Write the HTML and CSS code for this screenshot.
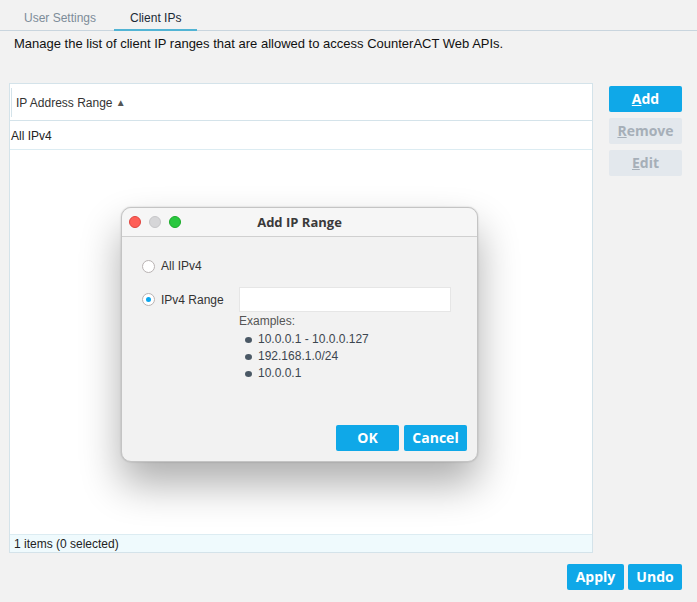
FILE: index.html
```html
<!DOCTYPE html>
<html>
<head>
<meta charset="utf-8">
<link rel="stylesheet" href="styles.css">
</head>
<body>
<div class="page">
  <div class="tabs">
    <div class="tab">User Settings</div>
    <div class="tab active">Client IPs</div>
  </div>
  <div class="desc">Manage the list of client IP ranges that are allowed to access CounterACT Web APIs.</div>
  <div class="main">
    <div class="table">
      <div class="thead"><span class="th">IP Address Range <span class="sort">&#9650;</span></span></div>
      <div class="row">All IPv4</div>
      <div class="tbody"></div>
      <div class="tfoot">1 items (0 selected)</div>
    </div>
    <div class="side">
      <button class="btn"><u>A</u>dd</button>
      <button class="btn disabled"><u>R</u>emove</button>
      <button class="btn disabled"><u>E</u>dit</button>
    </div>
  </div>
  <div class="bottom">
    <button class="btn small">Apply</button>
    <button class="btn small">Undo</button>
  </div>

  <div class="dialog">
    <div class="titlebar">
      <div class="lights"><span class="l red"></span><span class="l gray"></span><span class="l green"></span></div>
      <div class="title">Add IP Range</div>
    </div>
    <div class="dbody">
      <div class="opt"><span class="radio"></span><span>All IPv4</span></div>
      <div class="opt second">
        <span class="radio on"></span><span class="lbl">IPv4 Range</span>
        <div class="field">
          <div class="input"></div>
          <div class="ex">Examples:</div>
          <ul class="exlist">
            <li>10.0.0.1 - 10.0.0.127</li>
            <li>192.168.1.0/24</li>
            <li>10.0.0.1</li>
          </ul>
        </div>
      </div>
      <div class="dbtns">
        <button class="btn dlg">OK</button>
        <button class="btn dlg">Cancel</button>
      </div>
    </div>
  </div>
</div>
</body>
</html>
```

FILE: styles.css
```css
* { box-sizing: border-box; }
html, body { margin: 0; padding: 0; }
body {
  background: #f2f2f2;
  font-family: "Liberation Sans", Arial, sans-serif;
  font-size: 13px;
  color: #222;
  width: 697px;
  height: 602px;
  overflow: hidden;
}
.page { position: relative; width: 697px; height: 602px; }

.tabs {
  display: flex;
  gap: 2px;
  height: 31px;
  padding-left: 8px;
  border-bottom: 1px solid #c9d5de;
}
.tab {
  padding: 0 16px;
  height: 30px;
  line-height: 36px;
  font-size: 12px;
  color: #7d8c99;
}
.tab.active {
  color: #1c2a35;
  border-bottom: 2px solid #52b4d4;
  height: 31px;
}
.desc {
  padding: 3px 0 0 14px;
  height: 52px;
  line-height: 20px;
  font-size: 13px;
  color: #111;
}
.main {
  display: flex;
  gap: 16px;
  padding-left: 9px;
  height: 470px;
}
.table {
  width: 584px;
  height: 470px;
  background: #fff;
  border: 1px solid #d4e3ea;
  display: flex;
  flex-direction: column;
}
.thead {
  height: 37px;
  border-bottom: 1px solid #d4e3ea;
  display: flex;
  align-items: center;
  padding-left: 1px;
}
.th {
  border-left: 1px solid #d4e3ea;
  height: 29px;
  line-height: 31px;
  padding-left: 4px;
  font-size: 12px;
  color: #333;
}
.sort { font-size: 10px; color: #555; position: relative; top: -1px; }
.row {
  height: 29px;
  line-height: 30px;
  padding-left: 1px;
  font-size: 12px;
  color: #222;
  border-bottom: 1px solid #dcecf2;
}
.tbody { flex: 1; }
.tfoot {
  height: 18px;
  line-height: 19px;
  background: #effafd;
  border-top: 1px solid #dcecf2;
  padding-left: 4px;
  font-size: 12px;
  color: #222;
}
.side {
  display: flex;
  flex-direction: column;
  gap: 6px;
  padding-top: 3px;
}
.btn {
  border: none;
  border-radius: 2px;
  background: #0fa8e8;
  color: #fff;
  font-family: "Open Sans", "Noto Sans", sans-serif;
  font-weight: 700;
  font-size: 14px;
  width: 73px;
  height: 26px;
  padding: 0;
  line-height: 26px;
}
.btn.disabled { background: #e3e8ed; color: #a6afb8; }
.bottom {
  display: flex;
  justify-content: flex-end;
  gap: 4px;
  padding: 11px 15px 0 0;
}
.btn.small { width: auto; padding: 0 7px; }
.bottom .btn:first-child { width: 57px; }
.bottom .btn:last-child { width: 54px; }

.dialog {
  position: absolute;
  left: 121px;
  top: 207px;
  width: 357px;
  height: 255px;
  background: #f2f2f2;
  border: 1px solid #c4c4c4;
  border-radius: 10px;
  box-shadow: 0 22px 40px rgba(0,0,0,0.32), 0 0 2px rgba(0,0,0,0.2);
  display: flex;
  flex-direction: column;
}
.titlebar {
  height: 29px;
  border-bottom: 1px solid #d0d0d0;
  position: relative;
  display: flex;
  align-items: center;
  justify-content: center;
  background: #f6f6f6;
  border-radius: 10px 10px 0 0;
}
.lights {
  position: absolute;
  left: 7px;
  top: 8px;
  display: flex;
  gap: 8px;
}
.l { width: 12px; height: 12px; border-radius: 50%; display: block; }
.red { background: #fe5f57; border: 0.5px solid #e0443e; }
.gray { background: #d6d6d8; border: 0.5px solid #c6c6c8; }
.green { background: #29c73f; border: 0.5px solid #1aab29; }
.title {
  font-family: "Open Sans", "Noto Sans", sans-serif;
  font-weight: 700;
  font-size: 13px;
  color: #3a3a3a;
}
.dbody {
  position: relative;
  flex: 1;
  padding: 21px 0 0 20px;
  font-size: 12px;
  color: #333;
}
.opt { display: flex; align-items: center; gap: 6px; height: 16px; }
.opt.second { align-items: flex-start; margin-top: 18px; }
.radio {
  width: 13px; height: 13px;
  border-radius: 50%;
  border: 1px solid #b9b3b3;
  background: #fff;
  display: inline-block;
  position: relative;
  flex: none;
}
.radio.on::after {
  content: "";
  position: absolute;
  left: 3px; top: 3px;
  width: 5px; height: 5px;
  border-radius: 50%;
  background: #0aa6ee;
}
.opt.second .radio { margin-top: 1px; }
.opt.second .lbl { line-height: 16px; width: 72px; }
.field { margin-top: -5px; }
.input {
  width: 212px;
  height: 25px;
  background: #fff;
  border: 1px solid #e6e6e6;
}
.ex { margin-top: 0; line-height: 18px; color: #555; font-size: 12px; }
.exlist { list-style: none; margin: 1px 0 0 0; padding: 0 0 0 6px; }
.exlist li { line-height: 17px; color: #3c4650; position: relative; padding-left: 13px; }
.exlist li::before {
  content: "";
  position: absolute;
  left: 0; top: 6px;
  width: 7px; height: 6px;
  border-radius: 50%;
  background: #4a5865;
}
.dbtns {
  position: absolute;
  right: 10px;
  bottom: 10px;
  display: flex;
  gap: 5px;
}
.btn.dlg { width: 63px; height: 26px; font-size: 14px; }
```
